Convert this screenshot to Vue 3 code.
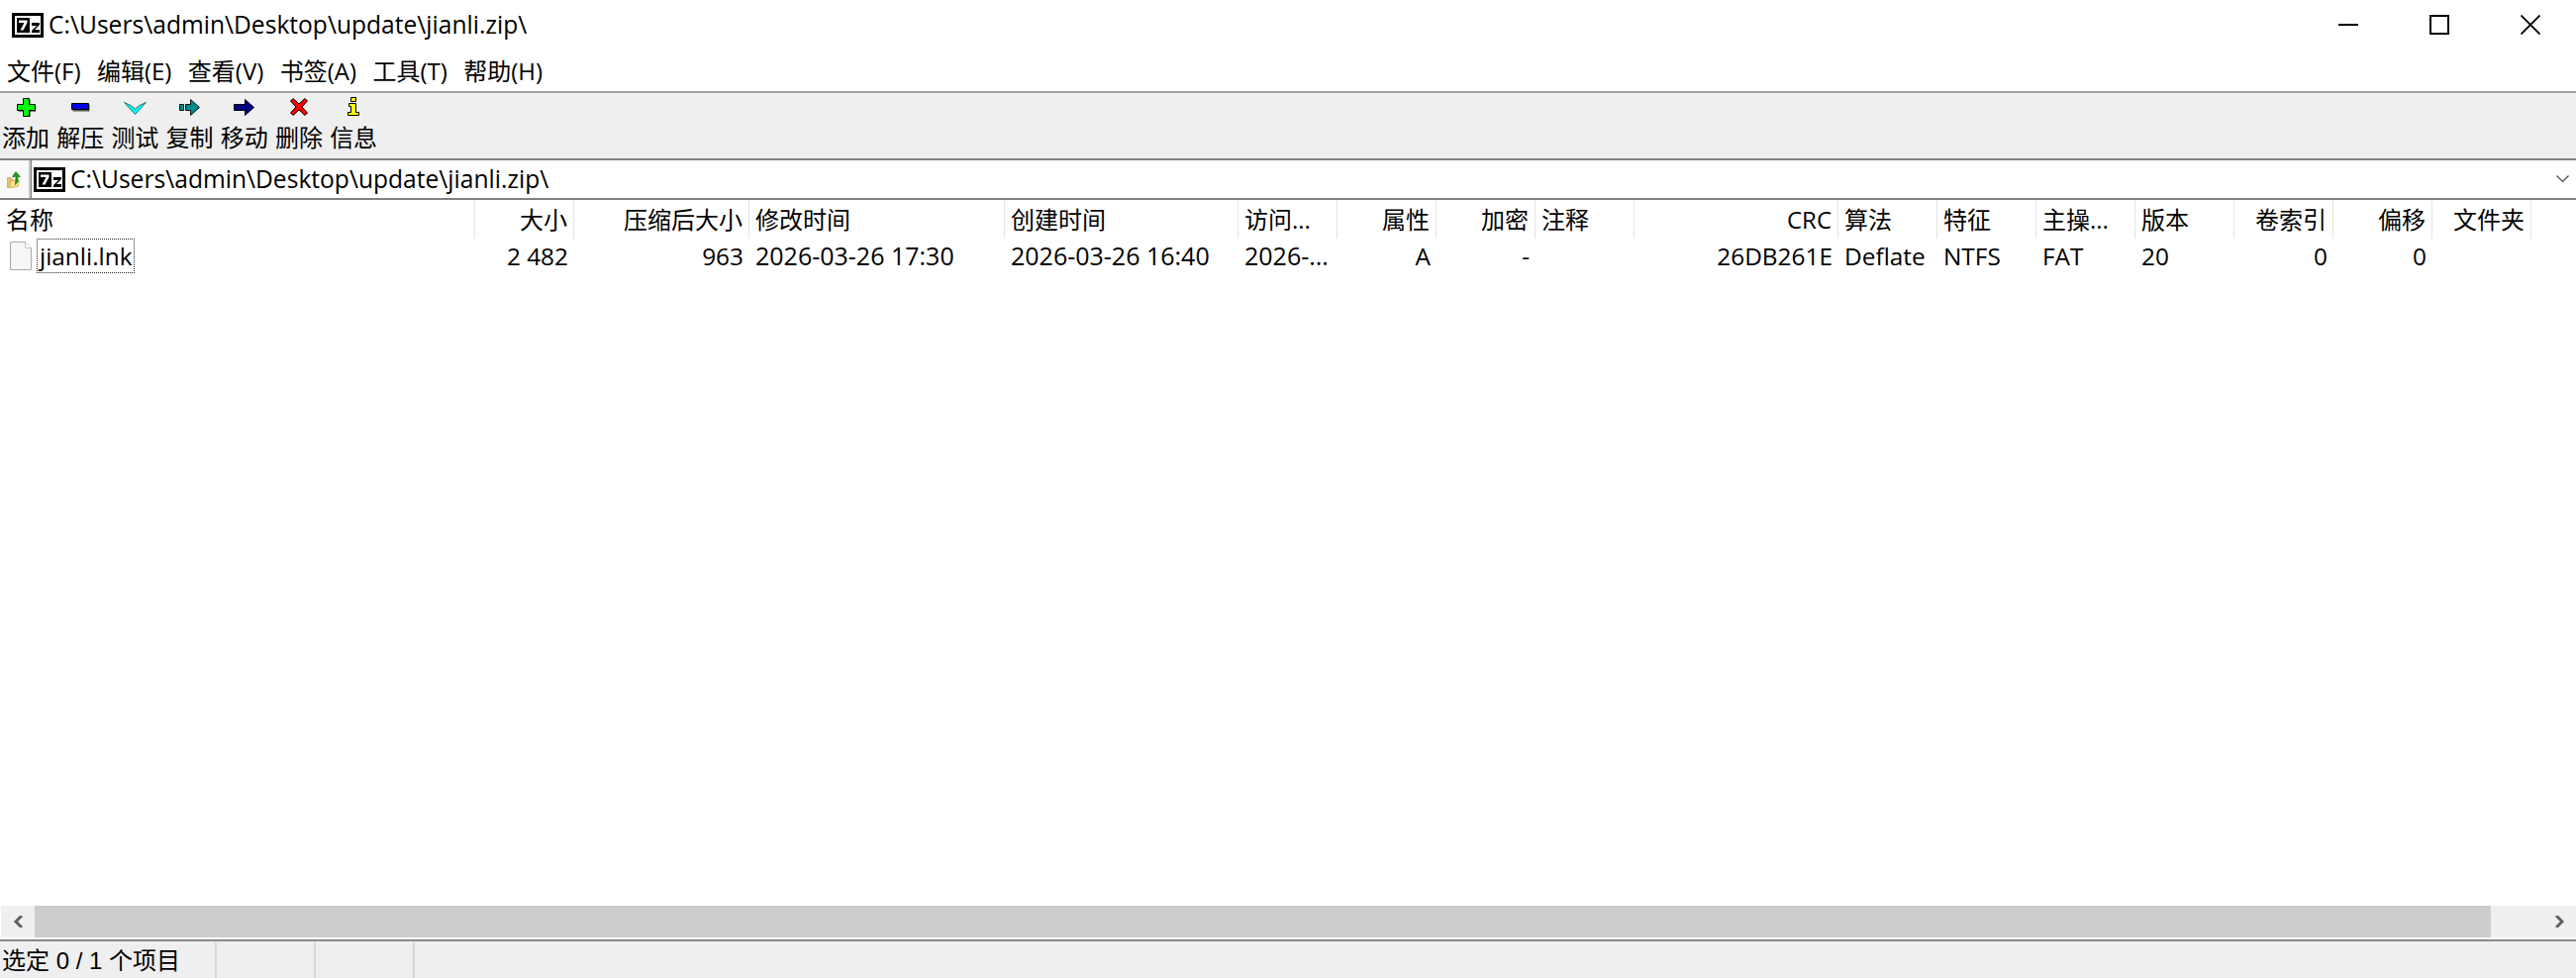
<script setup>
const menus = ['文件(F)', '编辑(E)', '查看(V)', '书签(A)', '工具(T)', '帮助(H)']
const tools = [
  { key: 'add', label: '添加', w: 19, h: 19, vb: '0 0 19 19', shapes: [
    { d: 'M7 1h6v6h6v6h-6v6H7v-6H1V7h6z', fill: '#555', extra: 'translate(.8 .8)' },
    { d: 'M6.500.5h6v6h6v6h-6v6h-6v-6h-6v-6h6z', fill: '#00ff00', stroke: '#000' }] },
  { key: 'ext', label: '解压', w: 19, h: 9, vb: '0 0 19 9', shapes: [
    { d: 'M1 1h17v7H1z', fill: '#555', extra: 'translate(.5 .5)' },
    { d: 'M.5.5h17v6H.5z', fill: '#0000e6', stroke: '#000' }] },
  { key: 'test', label: '测试', w: 23, h: 13, vb: '0 0 23 13', shapes: [
    { d: 'M.5.5L7 3.500 11.500 7 16 3.500 22.500.5 11.500 12.500z', fill: '#00ffff', stroke: '#2b6a6a' }] },
  { key: 'copy', label: '复制', w: 21, h: 17, vb: '0 0 21 17', shapes: [
    { d: 'M.5 5.500h4v6h-4z', fill: '#008b8b', stroke: '#111' },
    { d: 'M6.500 5.500h5v-5l9 8-9 8v-5h-5z', fill: '#008b8b', stroke: '#111' }] },
  { key: 'move', label: '移动', w: 21, h: 17, vb: '0 0 21 17', shapes: [
    { d: 'M.5 5.500h11v-5l9 8-9 8v-5H.5z', fill: '#000080', stroke: '#000' }] },
  { key: 'del', label: '删除', w: 18, h: 18, vb: '0 0 18 18', shapes: [
    { d: 'M3 .5L9 6l6-5.500L17.500 3 12 9l5.500 6-2.500 2.500L9 12l-6 5.500L.5 15 6 9 .5 3z', fill: '#ff0000', stroke: '#000' }] },
  { key: 'info', label: '信息', w: 12, h: 19, vb: '0 0 12 19', shapes: [
    { d: 'M3.500.5h5v4h-5zM1.500 6.500h7v9h3v3H.5v-3h3v-6h-2z', fill: '#ffff00', stroke: '#000' }] },
]
const columns = [
  { w: 480, title: '名称', value: '' },
  { w: 100, title: '大小', value: '2 482', right: true },
  { w: 177, title: '压缩后大小', value: '963', right: true },
  { w: 258, title: '修改时间', value: '2026-03-26 17:30', wide: true },
  { w: 236, title: '创建时间', value: '2026-03-26 16:40', wide: true },
  { w: 100, title: '访问...', value: '2026-...', wide: true },
  { w: 100, title: '属性', value: 'A', right: true },
  { w: 100, title: '加密', value: '-', right: true },
  { w: 100, title: '注释', value: '' },
  { w: 206, title: 'CRC', value: '26DB261E', right: true },
  { w: 100, title: '算法', value: 'Deflate' },
  { w: 100, title: '特征', value: 'NTFS' },
  { w: 100, title: '主操...', value: 'FAT' },
  { w: 100, title: '版本', value: '20' },
  { w: 100, title: '卷索引', value: '0', right: true },
  { w: 100, title: '偏移', value: '0', right: true },
  { w: 100, title: '文件夹', value: '', right: true },
]
const grid = { gridTemplateColumns: columns.map(c => c.w + 'px').join(' ') }
const path = 'C:\\Users\\admin\\Desktop\\update\\jianli.zip\\'
</script>

<template>
  <div class="win">
    <header class="title">
      <svg class="logo" viewBox="0 0 32 25" width="32" height="25"><rect x="1.500" y="1.500" width="29" height="22" fill="#fff" stroke="#000" stroke-width="3"/><rect x="5" y="5" width="13" height="15" fill="#000"/><path d="M7 7.500h8.500v2.500l-4 7.500h-3l4-7.500H7z" fill="#fff"/><path d="M20 10h8v2l-5 5h5v3h-8v-2l5-5h-5z" fill="#000"/></svg>
      <span class="path-text">{{ path }}</span>
      <div class="controls">
        <div class="ctl"><svg width="20" height="20" viewBox="0 0 20 20"><path d="M0 10h20" stroke="#000" stroke-width="2"/></svg></div>
        <div class="ctl"><svg width="20" height="20" viewBox="0 0 20 20"><rect x="1" y="1" width="18" height="18" fill="none" stroke="#000" stroke-width="2"/></svg></div>
        <div class="ctl"><svg width="20" height="20" viewBox="0 0 20 20"><path d="M.5.5l19 19M19.500.5l-19 19" stroke="#000" stroke-width="1.800"/></svg></div>
      </div>
    </header>

    <nav class="menu"><span v-for="m in menus" :key="m" class="menu-item">{{ m }}</span></nav>

    <section class="toolbar">
      <div v-for="t in tools" :key="t.key" class="tool" :class="'tool-' + t.key">
        <div class="tool-icon">
          <svg :width="t.w" :height="t.h" :viewBox="t.vb"><path v-for="(s, i) in t.shapes" :key="i" :d="s.d" :fill="s.fill" :stroke="s.stroke || 'none'" :transform="s.extra" /></svg>
        </div>
        <span class="tool-label">{{ t.label }}</span>
      </div>
    </section>

    <section class="address">
      <div class="up">
        <svg width="14" height="17" viewBox="0 0 14 17"><path d="M.5 6.500h3.500l1.500 1.500v8l-5 .5z" fill="#e8c660" stroke="#c7a850" stroke-width=".8"/><path d="M2.500 16.500l1-7h9l-1.500 6z" fill="#f8e08e" stroke="#c7a850" stroke-width=".8"/><path d="M9 .5l4.500 5h-2.500v5l-2.500 3 .5-8H5.500z" fill="#1f9c1f" stroke="#0d6e0d" stroke-width=".6"/></svg>
      </div>
      <div class="addr-box">
        <svg class="logo" viewBox="0 0 32 25" width="32" height="25"><rect x="1.500" y="1.500" width="29" height="22" fill="#fff" stroke="#000" stroke-width="3"/><rect x="5" y="5" width="13" height="15" fill="#000"/><path d="M7 7.500h8.500v2.500l-4 7.500h-3l4-7.500H7z" fill="#fff"/><path d="M20 10h8v2l-5 5h5v3h-8v-2l5-5h-5z" fill="#000"/></svg>
        <span class="path-text">{{ path }}</span>
        <svg class="chev" width="13" height="8" viewBox="0 0 13 8"><path d="M.5.500l6 6 6-6" fill="none" stroke="#444" stroke-width="1.200"/></svg>
      </div>
    </section>

    <main class="list">
      <div class="head" :style="grid">
        <div v-for="c in columns" :key="c.title" class="hcell" :class="{ right: c.right }">{{ c.title }}</div>
      </div>
      <div class="row" :style="grid">
        <div class="cell namecell">
          <svg width="22" height="29" viewBox="0 0 22 29"><path d="M.5.500h15l6 6v22H.500z" fill="#f5f7f7" stroke="#a9a9a9"/><path d="M15.500.5v6h6" fill="#fff" stroke="#c4c4c4"/></svg>
          <span class="focus">jianli.lnk</span>
        </div>
        <div v-for="c in columns.slice(1)" :key="c.title" class="cell" :class="{ right: c.right, wide: c.wide }">{{ c.value }}</div>
      </div>
    </main>

    <div class="scroll">
      <div class="sbtn left"><svg width="9" height="12" viewBox="0 0 9 12"><path d="M8 0L2 6l6 6" fill="none" stroke="#606060" stroke-width="3"/></svg></div>
      <div class="thumb"></div>
      <div class="sbtn right-btn"><svg width="9" height="12" viewBox="0 0 9 12"><path d="M1 0l6 6-6 6" fill="none" stroke="#606060" stroke-width="3"/></svg></div>
    </div>

    <footer class="status">
      <div class="st st1">选定 0 / 1 个项目</div>
      <div class="st st2"></div>
      <div class="st st2"></div>
    </footer>
  </div>
</template>

<style>
html, body { margin: 0; background: #fff; overflow: hidden; }
</style>

<style scoped>
.win {
  width: 2602px; height: 988px; display: flex; flex-direction: column; overflow: hidden;
  background: #fff; color: #000;
  font-family: "Open Sans", "Noto Sans CJK SC", sans-serif; font-size: 24px;
}
.title { height: 50px; flex: none; display: flex; align-items: center; padding-left: 12px; gap: 5px; }
.logo { flex: none; display: block; }
.path-text { white-space: pre; line-height: 32px; font-size: 24.6px; }
.controls { margin-left: auto; display: flex; align-self: stretch; }
.ctl { width: 92px; display: flex; align-items: center; justify-content: center; }
.menu { height: 44px; flex: none; box-sizing: border-box; display: flex; padding: 5px 0 0 7px; border-bottom: 2px solid #a0a0a0; }
.menu-item { padding-right: 16.400px; line-height: 34px; white-space: pre; }
.toolbar { height: 68px; flex: none; box-sizing: border-box; background: #efefef; display: flex; border-bottom: 2px solid #808080; }
.tool { width: 55.200px; display: flex; flex-direction: column; align-items: flex-start; }
.tool-icon { width: 52px; height: 20px; margin: 4px 0 4px; display: flex; align-items: center; justify-content: center; }
.tool-ext .tool-icon svg { margin-top: 1px; }
.tool-test .tool-icon svg { margin-top: 3px; }
.tool-info .tool-icon svg { margin-top: -2px; }
.tool-label { line-height: 34px; padding-left: 2px; white-space: pre; }
.address { height: 40px; flex: none; box-sizing: border-box; display: flex; border-bottom: 2px solid #808080; }
.up { width: 30px; flex: none; background: #f9f9f9; border-right: 2px solid #c4c4c4; display: flex; align-items: center; justify-content: center; margin-left: -1px; }
.addr-box { flex: 1; display: flex; align-items: center; padding-left: 2px; gap: 5px; border-left: 1px solid #808080; }
.chev { margin-left: auto; margin-right: 7px; }
.list { flex: 1; min-height: 0; }
.head { display: grid; height: 39px; }
.hcell { padding: 0 6px; line-height: 40px; height: 39px; border-right: 1px solid #e5e5e5; white-space: pre; overflow: hidden; }
.row { display: grid; height: 35px; }
.cell { padding: 0 6px; line-height: 35px; height: 35px; white-space: pre; font-size: 24.400px; }
.wide { font-size: 25px; }
.right { text-align: right; }
.namecell { display: flex; align-items: center; padding: 0 0 0 10px; gap: 5px; }
.namecell svg { flex: none; }
.focus { border: 1px dotted #222; height: 35px; line-height: 33px; padding: 0 2px; box-sizing: border-box; }
.scroll { height: 32px; flex: none; display: flex; margin-left: 1px; background: #efefef; }
.sbtn { display: flex; align-items: center; justify-content: center; flex: none; }
.left { width: 34px; }
.thumb { width: 2481px; background: #cdcdcd; }
.right-btn { flex: 1; padding-left: 52px; }
.status { height: 39px; flex: none; box-sizing: border-box; margin-top: 2px; border-top: 2px solid #888; background: #efefef; display: flex; }
.st { border-right: 2px solid #d8d8d8; margin-top: 1px; box-sizing: border-box; }
.st1 { width: 219px; padding-left: 2px; line-height: 38px; white-space: pre; font-family: "Liberation Sans", "Noto Sans CJK SC", sans-serif; }
.st2 { width: 100px; }
</style>
